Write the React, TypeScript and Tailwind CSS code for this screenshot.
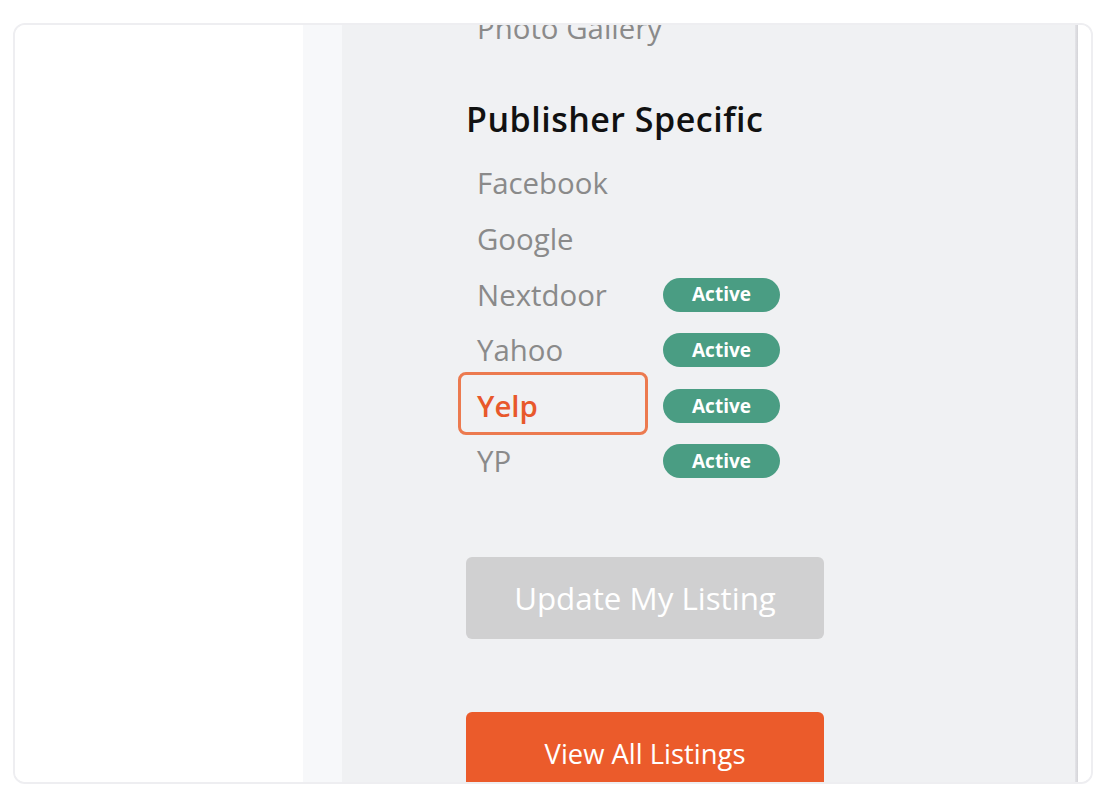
import React from "react";

const items = [
  { name: "Facebook", active: false },
  { name: "Google", active: false },
  { name: "Nextdoor", active: true },
  { name: "Yahoo", active: true },
  { name: "Yelp", active: true, highlight: true },
  { name: "YP", active: true },
];

export default function App() {
  return (
    <div
      className="w-[1118px] h-[796px] bg-white pt-[23px] pl-[13px]"
      style={{ fontFamily: '"Open Sans", "Noto Sans", sans-serif' }}
    >
      <div className="w-[1080px] h-[761px] border-2 border-[#eeeef1] rounded-[12px] overflow-hidden flex bg-white">
        <div className="w-[288px] bg-white" />
        <div className="w-[39px] bg-[#f7f8fa]" />
        <div className="flex-1 bg-[#f0f1f3] overflow-hidden">
          <div className="mt-[-25px] pl-[124px] flex flex-col">
            <div className="h-[55.6px] flex items-center pl-[11px] text-[29.4px] text-[#8a8a8a]">
              Photo Gallery
            </div>
            <div className="mt-[44px] h-[40px] flex items-center text-[34px] font-semibold text-[#111] tracking-[0.5px]">
              Publisher Specific
            </div>
            <div className="mt-[16px] flex flex-col pl-[11px]">
              {items.map((it) => (
                <div key={it.name} className="h-[55.6px] flex items-center relative">
                  {it.highlight && (
                    <div className="absolute left-[-19px] top-[-6px] w-[190px] h-[63px] border-[3.5px] border-[#ec7a4f] rounded-[8px]" />
                  )}
                  <div
                    className={
                      "w-[186px] text-[29.4px] " +
                      (it.highlight ? "text-[#e8582b] font-semibold" : "text-[#8a8a8a]")
                    }
                  >
                    {it.name}
                  </div>
                  {it.active && (
                    <div className="w-[117px] h-[34px] rounded-full bg-[#4a9d83] text-white text-[19px] font-bold flex items-center justify-center">
                      Active
                    </div>
                  )}
                </div>
              ))}
            </div>
            <div className="mt-[68px] w-[358px] h-[82px] rounded-[6px] bg-[#d0d0d1] text-white text-[31.3px] flex items-center justify-center">
              Update My Listing
            </div>
            <div className="mt-[73px] w-[358px] h-[82px] rounded-[6px] bg-[#eb5b2b] text-white text-[27.4px] flex items-center justify-center">
              View All Listings
            </div>
          </div>
        </div>
        <div className="w-[3px] bg-gradient-to-r from-[#e4e4e8] to-[#d4d4d8]" />
        <div className="w-[13px] bg-white" />
      </div>
    </div>
  );
}
